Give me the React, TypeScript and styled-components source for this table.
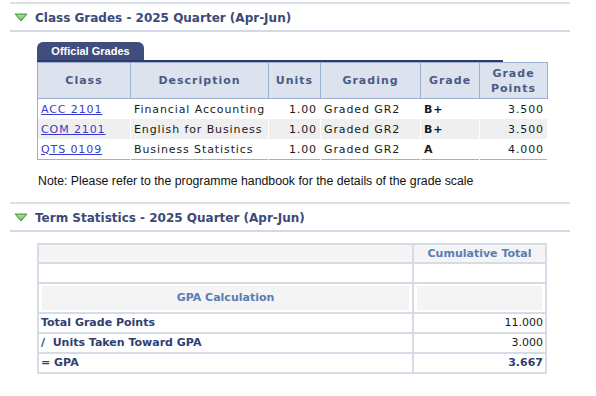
import React from "react";
import styled, { createGlobalStyle } from "styled-components";

const GlobalStyle = createGlobalStyle`
  body {
    margin: 0;
    background: #ffffff;
    font-family: "DejaVu Sans", Verdana, sans-serif;
  }
`;

const Page = styled.div`
  width: 560px;
  padding: 2px 0 0 10px;
`;

const SectionHeader = styled.div`
  display: flex;
  align-items: center;
  gap: 7px;
  height: 26px;
  padding-left: 4px;
  border-top: 2px solid #d9dfeb;
  border-bottom: 2px solid #d3d9e7;
`;

const SectionTitle = styled.h2`
  margin: 2px 0 0;
  font-size: 12px;
  font-weight: bold;
  color: #3b4a78;
`;

const Block = styled.div<{ $top: number }>`
  margin: ${(p) => p.$top}px 0 0 27px;
`;

const TabRow = styled.div`
  width: 466px;
  border-bottom: 2px solid #2f3b62;
`;

const Tab = styled.div`
  display: inline-block;
  width: 107px;
  height: 18px;
  line-height: 18px;
  text-align: center;
  background: #3f4e7d;
  border-radius: 6px 6px 0 0;
  color: #ffffff;
  font-family: "Liberation Sans", Arial, sans-serif;
  font-weight: bold;
  font-size: 11px;
  vertical-align: bottom;
`;

const GradeTable = styled.table`
  width: 504px;
  border-collapse: collapse;
  table-layout: fixed;
  border: 1px solid #9cb0d3;
  font-size: 11px;
`;

const GradeTh = styled.th<{ $w: number }>`
  width: ${(p) => p.$w}px;
  height: 35px;
  padding: 0;
  background: #dce3ee;
  border: 1px solid #9cb0d3;
  color: #4a5a85;
  font-weight: bold;
  letter-spacing: 1px;
  line-height: 15px;
`;

const GradeRow = styled.tr<{ $shade: boolean }>`
  background: ${(p) => (p.$shade ? "#efefef" : "#ffffff")};
`;

const GradeTd = styled.td<{ $align?: string; $bold?: boolean }>`
  height: 20px;
  padding: 0 3px;
  border-right: 1px solid #ffffff;
  text-align: ${(p) => p.$align || "left"};
  font-weight: ${(p) => (p.$bold ? "bold" : "normal")};
  color: #1a1a1a;
  letter-spacing: 0.9px;
  white-space: nowrap;
`;

const ClassLink = styled.a`
  color: #3a3acf;
  text-decoration: underline;
`;

const Note = styled.p`
  margin: 14px 0 0 28px;
  font-family: "Liberation Sans", Arial, sans-serif;
  font-size: 12.3px;
  color: #111111;
`;

const Spacer = styled.div`
  height: 14px;
`;

const StatTable = styled.table`
  width: 510px;
  border-collapse: collapse;
  table-layout: fixed;
  border: 2px solid #cfd5e4;
  font-size: 11px;
`;

const StatCell = styled.td<{ $w?: number; $align?: string }>`
  ${(p) => (p.$w ? `width: ${p.$w}px;` : "")}
  height: 18px;
  padding: 0 2px;
  border: 2px solid #d6dbe8;
  text-align: ${(p) => p.$align || "left"};
  color: #1a1a1a;
  line-height: 16px;
`;

const StatHeadCell = styled(StatCell)`
  height: 17px;
  background: #f4f4f4;
  color: #5a7db5;
  font-weight: bold;
  text-align: center;
`;

const InsetCell = styled.td`
  padding: 2px 3px;
  border: 2px solid #d6dbe8;
`;

const InsetBox = styled.div`
  height: 24px;
  line-height: 24px;
  background: #f4f4f4;
  color: #5a7db5;
  font-weight: bold;
  text-align: center;
`;

const Label = styled.span`
  font-weight: bold;
  color: #2f3f70;
`;

const Gpa = styled.span`
  font-weight: bold;
  color: #2f3f70;
`;

const Arrow = () => (
  <svg width="14" height="9" viewBox="0 0 14 9">
    <path d="M1 1 L13 1 L7 8 Z" fill="#7cc46b" stroke="#4f9a44" strokeWidth="1" />
    <path d="M3 2 L11 2 L7 5 Z" fill="#a6dc97" />
  </svg>
);

const grades = [
  { cls: "ACC 2101", desc: "Financial Accounting", grade: "B+", pts: "3.500" },
  { cls: "COM 2101", desc: "English for Business", grade: "B+", pts: "3.500" },
  { cls: "QTS 0109", desc: "Business Statistics", grade: "A", pts: "4.000" },
];

export default function App() {
  return (
    <>
      <GlobalStyle />
      <Page>
        <SectionHeader>
          <Arrow />
          <SectionTitle>Class Grades - 2025 Quarter (Apr-Jun)</SectionTitle>
        </SectionHeader>

        <Block $top={9}>
          <TabRow>
            <Tab>Official Grades</Tab>
          </TabRow>
          <GradeTable>
            <thead>
              <tr>
                <GradeTh $w={92}>Class</GradeTh>
                <GradeTh $w={137}>Description</GradeTh>
                <GradeTh $w={51}>Units</GradeTh>
                <GradeTh $w={99}>Grading</GradeTh>
                <GradeTh $w={58}>Grade</GradeTh>
                <GradeTh $w={67}>
                  Grade
                  <br />
                  Points
                </GradeTh>
              </tr>
            </thead>
            <tbody>
              {grades.map((g, i) => (
                <GradeRow key={g.cls} $shade={i === 1}>
                  <GradeTd>
                    <ClassLink href="#">{g.cls}</ClassLink>
                  </GradeTd>
                  <GradeTd>{g.desc}</GradeTd>
                  <GradeTd $align="right">1.00</GradeTd>
                  <GradeTd>Graded GR2</GradeTd>
                  <GradeTd $bold>{g.grade}</GradeTd>
                  <GradeTd $align="right">{g.pts}</GradeTd>
                </GradeRow>
              ))}
            </tbody>
          </GradeTable>
        </Block>

        <Note>Note: Please refer to the programme handbook for the details of the grade scale</Note>
        <Spacer />

        <SectionHeader>
          <Arrow />
          <SectionTitle>Term Statistics - 2025 Quarter (Apr-Jun)</SectionTitle>
        </SectionHeader>

        <Block $top={11}>
          <StatTable>
            <tbody>
              <tr>
                <StatHeadCell $w={369}></StatHeadCell>
                <StatHeadCell>Cumulative Total</StatHeadCell>
              </tr>
              <tr>
                <StatCell />
                <StatCell />
              </tr>
              <tr>
                <InsetCell>
                  <InsetBox>GPA Calculation</InsetBox>
                </InsetCell>
                <InsetCell>
                  <InsetBox />
                </InsetCell>
              </tr>
              <tr>
                <StatCell>
                  <Label>Total Grade Points</Label>
                </StatCell>
                <StatCell $align="right">11.000</StatCell>
              </tr>
              <tr>
                <StatCell>
                  <Label>/&nbsp; Units Taken Toward GPA</Label>
                </StatCell>
                <StatCell $align="right">3.000</StatCell>
              </tr>
              <tr>
                <StatCell>
                  <Label>= GPA</Label>
                </StatCell>
                <StatCell $align="right">
                  <Gpa>3.667</Gpa>
                </StatCell>
              </tr>
            </tbody>
          </StatTable>
        </Block>
      </Page>
    </>
  );
}
